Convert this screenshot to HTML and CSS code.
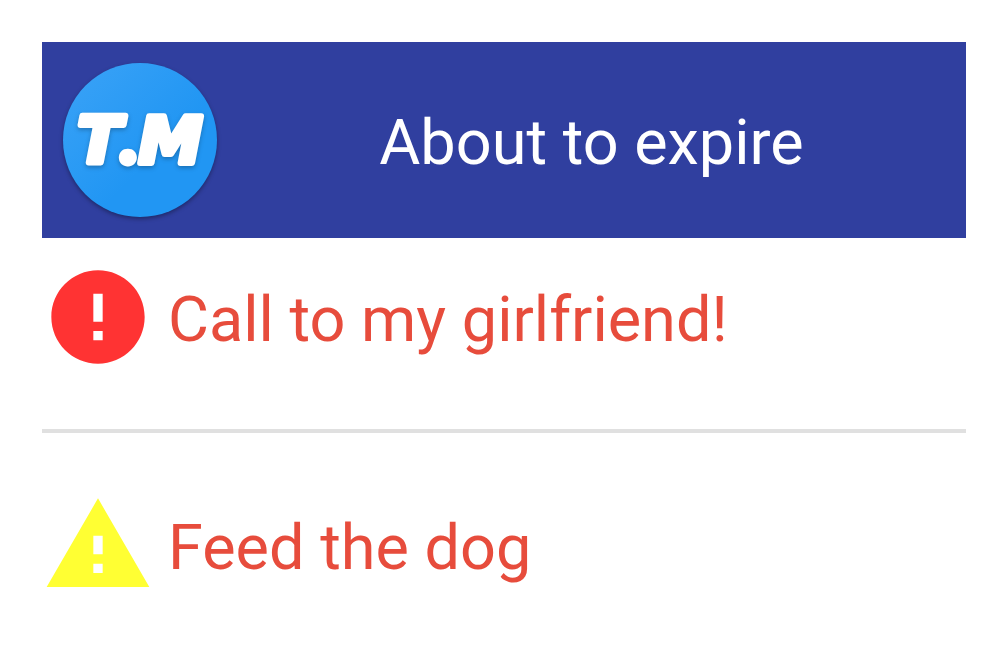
FILE: index.html
```html
<!DOCTYPE html>
<html lang="en">
<head>
<meta charset="utf-8">
<meta name="viewport" content="width=device-width, initial-scale=1">
<title>About to expire</title>
<link rel="stylesheet" href="styles.css">
</head>
<body>
<main class="widget">
  <header class="header">
    <svg class="logo" viewBox="0 0 154 154" role="img" aria-label="T.M">
      <defs>
        <linearGradient id="disc" x1="0" y1="0" x2="1" y2="1">
          <stop offset="0" stop-color="#3ba3f7"/>
          <stop offset="0.6" stop-color="#2196f3"/>
        </linearGradient>
      </defs>
      <circle class="logo-disc" cx="77" cy="77" r="77" fill="url(#disc)"/>
      <text class="logo-text" x="77" y="100" text-anchor="middle">T<tspan class="logo-dot">.</tspan>M</text>
    </svg>
    <h1 class="title">About to expire</h1>
  </header>
  <ul class="tasks">
    <li class="task">
      <svg class="icon icon-error" viewBox="0 0 24 24" aria-hidden="true">
        <path d="M12 2C6.48 2 2 6.48 2 12s4.480 10 10 10 10-4.480 10-10S17.520 2 12 2zm1 15h-2v-2h2v2zm0-4h-2V7h2v6z"/>
      </svg>
      <span class="task-name">Call to my girlfriend!</span>
    </li>
    <li class="task">
      <svg class="icon icon-warning" viewBox="0 0 24 24" aria-hidden="true">
        <path d="M1 21h22L12 2 1 21zm12-3h-2v-2h2v2zm0-4h-2v-4h2v4z"/>
      </svg>
      <span class="task-name">Feed the dog</span>
    </li>
  </ul>
</main>
</body>
</html>
```
FILE: styles.css
```css
body {
  margin: 0;
  background: #fff;
  font-family: Roboto, "Liberation Sans", sans-serif;
  font-size: 63px;
  line-height: 74px;
}

.widget {
  padding: 42px 42px 0;
}

.header {
  display: flex;
  align-items: center;
  padding: 21px 0 21px 21px;
  background: #303f9f;
}

.logo {
  flex: none;
  width: 154px;
  height: 154px;
  overflow: visible;
}

.logo-disc {
  filter: drop-shadow(0 2px 2px rgba(0, 0, 0, 0.35));
}

.logo-text {
  fill: #fff;
  stroke: #fff;
  stroke-width: 6px;
  stroke-linejoin: round;
  font: italic 700 64px "DejaVu Sans", sans-serif;
  filter: drop-shadow(0 2px 2px rgba(0, 0, 0, 0.25));
}

.logo-dot {
  font: italic 900 74px Lato, sans-serif;
}

.title {
  flex: 1;
  margin: 0;
  padding-top: 5px;
  color: #fff;
  font-size: 63px;
  font-weight: 400;
  text-align: center;
}

.tasks {
  margin: 0;
  padding: 0;
  list-style: none;
}

.task {
  display: flex;
  align-items: center;
  gap: 14px;
  padding: 56px 0;
}

.task:first-child {
  padding-top: 23px;
}

.task + .task {
  border-top: 4px solid #e0e0e0;
}

.task-name {
  padding-top: 5px;
  color: #e74c3c;
}

.icon {
  flex: none;
  width: 112px;
  height: 112px;
}

.icon-error {
  fill: #f33;
}

.icon-warning {
  fill: #ff3;
}
```
